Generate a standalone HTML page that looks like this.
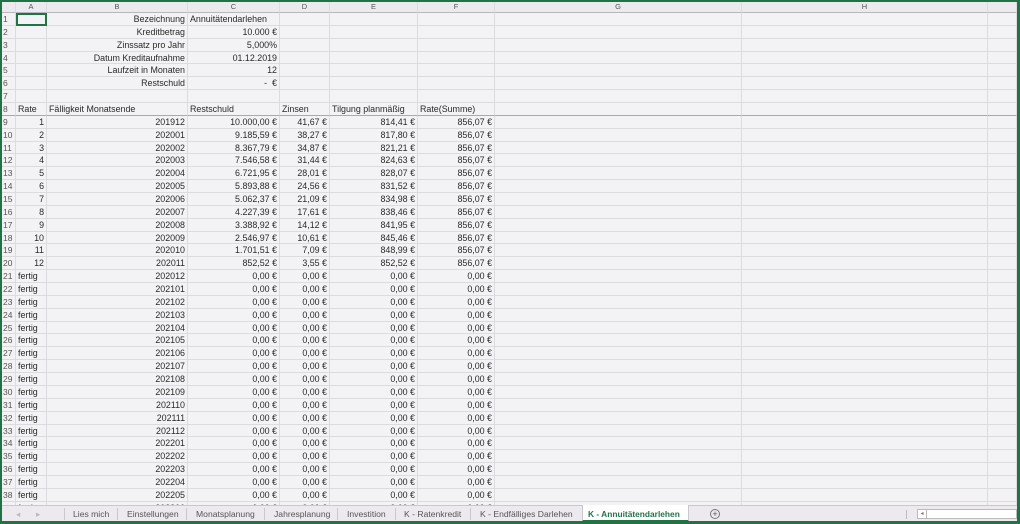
<!DOCTYPE html>
<html><head><meta charset="utf-8"><style>
*{box-sizing:border-box;margin:0;padding:0}
body{width:1020px;height:524px;overflow:hidden;background:#217346;font-family:"Liberation Sans",sans-serif;font-size:8.9px;color:#2a2a2a;position:relative}
#s{position:absolute;left:2px;top:2px;width:1015px;height:519px;background:#f3f2f5;overflow:hidden}
.r{display:grid;grid-template-columns:14px 31px 141px 92px 50px 88px 77px 247px 246px 29px;height:12.87px;line-height:12.3px;white-space:nowrap}
.r>span{border-right:1px solid #dcdbe0;border-bottom:1px solid #dcdbe0;overflow:hidden;padding:0 2px}
.r>span:first-child{color:#555;padding-left:1px;font-size:8.5px}
.h{height:11px;line-height:10px;background:#eceaee}
.h>span{text-align:center;color:#555;border-bottom:1px solid #b8b8bb;font-size:7.5px}
.n{text-align:right}
.b8>span{border-bottom:1px solid #a9a9ad}
#tabs{position:absolute;left:0;top:503px;width:1015px;height:16px;background:#eceaee;border-top:1px solid #c9c8cc;font-size:8.6px;color:#555}
#tabs span{position:absolute;top:3px}
.sep{position:absolute;top:2px;width:1px;height:12px;background:#c9c8cc}
</style></head><body><div id="s">
<div class="r h"><span></span><span>A</span><span>B</span><span>C</span><span>D</span><span>E</span><span>F</span><span>G</span><span>H</span><span></span></div>
<div class="r"><span>1</span><span style="border:2px solid #217346"></span><span class="n">Bezeichnung</span><span>Annuitätendarlehen</span><span></span><span></span><span></span><span></span><span></span><span></span></div>
<div class="r"><span>2</span><span></span><span class="n">Kreditbetrag</span><span class="n">10.000 €</span><span></span><span></span><span></span><span></span><span></span><span></span></div>
<div class="r"><span>3</span><span></span><span class="n">Zinssatz pro Jahr</span><span class="n">5,000%</span><span></span><span></span><span></span><span></span><span></span><span></span></div>
<div class="r"><span>4</span><span></span><span class="n">Datum Kreditaufnahme</span><span class="n">01.12.2019</span><span></span><span></span><span></span><span></span><span></span><span></span></div>
<div class="r"><span>5</span><span></span><span class="n">Laufzeit in Monaten</span><span class="n">12</span><span></span><span></span><span></span><span></span><span></span><span></span></div>
<div class="r"><span>6</span><span></span><span class="n">Restschuld</span><span class="n">-&nbsp;&nbsp;€</span><span></span><span></span><span></span><span></span><span></span><span></span></div>
<div class="r"><span>7</span><span></span><span></span><span></span><span></span><span></span><span></span><span></span><span></span><span></span></div>
<div class="r b8"><span>8</span><span>Rate</span><span>Fälligkeit Monatsende</span><span>Restschuld</span><span>Zinsen</span><span>Tilgung planmäßig</span><span>Rate(Summe)</span><span></span><span></span><span></span></div>
<div class="r"><span>9</span><span class="n">1</span><span class="n">201912</span><span class="n">10.000,00 €</span><span class="n">41,67 €</span><span class="n">814,41 €</span><span class="n">856,07 €</span><span></span><span></span><span></span></div>
<div class="r"><span>10</span><span class="n">2</span><span class="n">202001</span><span class="n">9.185,59 €</span><span class="n">38,27 €</span><span class="n">817,80 €</span><span class="n">856,07 €</span><span></span><span></span><span></span></div>
<div class="r"><span>11</span><span class="n">3</span><span class="n">202002</span><span class="n">8.367,79 €</span><span class="n">34,87 €</span><span class="n">821,21 €</span><span class="n">856,07 €</span><span></span><span></span><span></span></div>
<div class="r"><span>12</span><span class="n">4</span><span class="n">202003</span><span class="n">7.546,58 €</span><span class="n">31,44 €</span><span class="n">824,63 €</span><span class="n">856,07 €</span><span></span><span></span><span></span></div>
<div class="r"><span>13</span><span class="n">5</span><span class="n">202004</span><span class="n">6.721,95 €</span><span class="n">28,01 €</span><span class="n">828,07 €</span><span class="n">856,07 €</span><span></span><span></span><span></span></div>
<div class="r"><span>14</span><span class="n">6</span><span class="n">202005</span><span class="n">5.893,88 €</span><span class="n">24,56 €</span><span class="n">831,52 €</span><span class="n">856,07 €</span><span></span><span></span><span></span></div>
<div class="r"><span>15</span><span class="n">7</span><span class="n">202006</span><span class="n">5.062,37 €</span><span class="n">21,09 €</span><span class="n">834,98 €</span><span class="n">856,07 €</span><span></span><span></span><span></span></div>
<div class="r"><span>16</span><span class="n">8</span><span class="n">202007</span><span class="n">4.227,39 €</span><span class="n">17,61 €</span><span class="n">838,46 €</span><span class="n">856,07 €</span><span></span><span></span><span></span></div>
<div class="r"><span>17</span><span class="n">9</span><span class="n">202008</span><span class="n">3.388,92 €</span><span class="n">14,12 €</span><span class="n">841,95 €</span><span class="n">856,07 €</span><span></span><span></span><span></span></div>
<div class="r"><span>18</span><span class="n">10</span><span class="n">202009</span><span class="n">2.546,97 €</span><span class="n">10,61 €</span><span class="n">845,46 €</span><span class="n">856,07 €</span><span></span><span></span><span></span></div>
<div class="r"><span>19</span><span class="n">11</span><span class="n">202010</span><span class="n">1.701,51 €</span><span class="n">7,09 €</span><span class="n">848,99 €</span><span class="n">856,07 €</span><span></span><span></span><span></span></div>
<div class="r"><span>20</span><span class="n">12</span><span class="n">202011</span><span class="n">852,52 €</span><span class="n">3,55 €</span><span class="n">852,52 €</span><span class="n">856,07 €</span><span></span><span></span><span></span></div>
<div class="r"><span>21</span><span>fertig</span><span class="n">202012</span><span class="n">0,00 €</span><span class="n">0,00 €</span><span class="n">0,00 €</span><span class="n">0,00 €</span><span></span><span></span><span></span></div>
<div class="r"><span>22</span><span>fertig</span><span class="n">202101</span><span class="n">0,00 €</span><span class="n">0,00 €</span><span class="n">0,00 €</span><span class="n">0,00 €</span><span></span><span></span><span></span></div>
<div class="r"><span>23</span><span>fertig</span><span class="n">202102</span><span class="n">0,00 €</span><span class="n">0,00 €</span><span class="n">0,00 €</span><span class="n">0,00 €</span><span></span><span></span><span></span></div>
<div class="r"><span>24</span><span>fertig</span><span class="n">202103</span><span class="n">0,00 €</span><span class="n">0,00 €</span><span class="n">0,00 €</span><span class="n">0,00 €</span><span></span><span></span><span></span></div>
<div class="r"><span>25</span><span>fertig</span><span class="n">202104</span><span class="n">0,00 €</span><span class="n">0,00 €</span><span class="n">0,00 €</span><span class="n">0,00 €</span><span></span><span></span><span></span></div>
<div class="r"><span>26</span><span>fertig</span><span class="n">202105</span><span class="n">0,00 €</span><span class="n">0,00 €</span><span class="n">0,00 €</span><span class="n">0,00 €</span><span></span><span></span><span></span></div>
<div class="r"><span>27</span><span>fertig</span><span class="n">202106</span><span class="n">0,00 €</span><span class="n">0,00 €</span><span class="n">0,00 €</span><span class="n">0,00 €</span><span></span><span></span><span></span></div>
<div class="r"><span>28</span><span>fertig</span><span class="n">202107</span><span class="n">0,00 €</span><span class="n">0,00 €</span><span class="n">0,00 €</span><span class="n">0,00 €</span><span></span><span></span><span></span></div>
<div class="r"><span>29</span><span>fertig</span><span class="n">202108</span><span class="n">0,00 €</span><span class="n">0,00 €</span><span class="n">0,00 €</span><span class="n">0,00 €</span><span></span><span></span><span></span></div>
<div class="r"><span>30</span><span>fertig</span><span class="n">202109</span><span class="n">0,00 €</span><span class="n">0,00 €</span><span class="n">0,00 €</span><span class="n">0,00 €</span><span></span><span></span><span></span></div>
<div class="r"><span>31</span><span>fertig</span><span class="n">202110</span><span class="n">0,00 €</span><span class="n">0,00 €</span><span class="n">0,00 €</span><span class="n">0,00 €</span><span></span><span></span><span></span></div>
<div class="r"><span>32</span><span>fertig</span><span class="n">202111</span><span class="n">0,00 €</span><span class="n">0,00 €</span><span class="n">0,00 €</span><span class="n">0,00 €</span><span></span><span></span><span></span></div>
<div class="r"><span>33</span><span>fertig</span><span class="n">202112</span><span class="n">0,00 €</span><span class="n">0,00 €</span><span class="n">0,00 €</span><span class="n">0,00 €</span><span></span><span></span><span></span></div>
<div class="r"><span>34</span><span>fertig</span><span class="n">202201</span><span class="n">0,00 €</span><span class="n">0,00 €</span><span class="n">0,00 €</span><span class="n">0,00 €</span><span></span><span></span><span></span></div>
<div class="r"><span>35</span><span>fertig</span><span class="n">202202</span><span class="n">0,00 €</span><span class="n">0,00 €</span><span class="n">0,00 €</span><span class="n">0,00 €</span><span></span><span></span><span></span></div>
<div class="r"><span>36</span><span>fertig</span><span class="n">202203</span><span class="n">0,00 €</span><span class="n">0,00 €</span><span class="n">0,00 €</span><span class="n">0,00 €</span><span></span><span></span><span></span></div>
<div class="r"><span>37</span><span>fertig</span><span class="n">202204</span><span class="n">0,00 €</span><span class="n">0,00 €</span><span class="n">0,00 €</span><span class="n">0,00 €</span><span></span><span></span><span></span></div>
<div class="r"><span>38</span><span>fertig</span><span class="n">202205</span><span class="n">0,00 €</span><span class="n">0,00 €</span><span class="n">0,00 €</span><span class="n">0,00 €</span><span></span><span></span><span></span></div>
<div class="r"><span>39</span><span>fertig</span><span class="n">202206</span><span class="n">0,00 €</span><span class="n">0,00 €</span><span class="n">0,00 €</span><span class="n">0,00 €</span><span></span><span></span><span></span></div>
<div id="tabs">
<span style="left:14px;color:#bbb">◂</span><span style="left:34px;color:#bbb">▸</span>
<div class="sep" style="left:62px"></div><span style="left:71px">Lies mich</span>
<div class="sep" style="left:115px"></div><span style="left:125px">Einstellungen</span>
<div class="sep" style="left:184px"></div><span style="left:194px">Monatsplanung</span>
<div class="sep" style="left:262px"></div><span style="left:272px">Jahresplanung</span>
<div class="sep" style="left:335px"></div><span style="left:345px">Investition</span>
<div class="sep" style="left:393px"></div><span style="left:402px">K - Ratenkredit</span>
<div class="sep" style="left:468px"></div><span style="left:478px">K - Endfälliges Darlehen</span>
<div style="position:absolute;left:580px;top:-1px;width:107px;height:17px;background:#fff;border-bottom:2px solid #217346;border-left:1px solid #c9c8cc;border-right:1px solid #c9c8cc"></div>
<span style="left:586px;color:#217346;font-weight:bold;font-size:8.4px">K - Annuitätendarlehen</span>
<div style="position:absolute;left:708px;top:3px;width:10px;height:10px;border:1px solid #777;border-radius:50%;font-size:9px;line-height:8px;text-align:center;color:#555">+</div>
<div class="sep" style="left:904px;background:#bbb;height:9px;top:4px"></div>
<div style="position:absolute;left:915px;top:3px;width:100px;height:10px;border:1px solid #bbb;background:#fff"></div>
<div style="position:absolute;left:915px;top:3px;width:10px;height:10px;border:1px solid #bbb;font-size:6px;text-align:center;line-height:8px;color:#777">◂</div>
</div>
</div></body></html>
